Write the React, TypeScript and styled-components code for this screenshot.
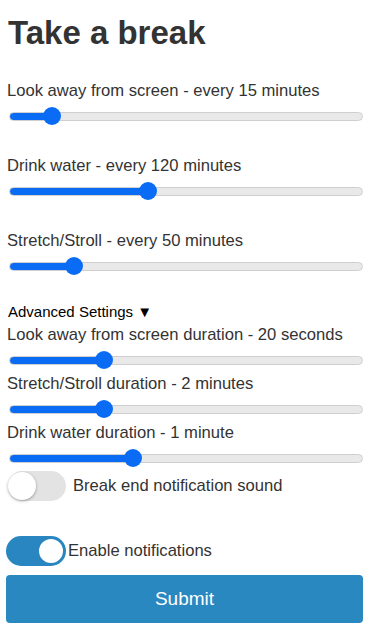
import { useState } from "react";
import styled, { createGlobalStyle } from "styled-components";

const GlobalStyle = createGlobalStyle`
  body {
    margin: 0;
    background: #fff;
    font-family: "Liberation Sans", Arial, sans-serif;
    color: #333;
  }
`;

const Page = styled.form`
  padding: 14px 7px 7px 6px;
  display: flex;
  flex-direction: column;
`;

const Title = styled.h1`
  margin: 0 0 0 2px;
  font-size: 33px;
  line-height: 37px;
  font-weight: bold;
  color: #333;
`;

const Section = styled.div<{ $tight?: boolean }>`
  display: flex;
  flex-direction: column;
  margin-top: ${(p) => (p.$tight ? "4px" : "30px")};
`;

const Label = styled.label`
  display: block;
  margin-left: 1px;
  font-size: 16.6px;
  line-height: 20px;
  white-space: nowrap;
`;

const Range = styled.input`
  -webkit-appearance: none;
  appearance: none;
  display: block;
  width: calc(100% - 3px);
  height: 20px;
  margin: 5px 0 0 3px;
  background: transparent;

  &::-webkit-slider-runnable-track {
    height: 9px;
    border-radius: 5px;
    border: 1px solid #cfcfcf;
    box-sizing: border-box;
    background: linear-gradient(
      to right,
      #0a6cf5 calc(9px + var(--fill) * (100% - 18px)),
      #e9e9e9 calc(9px + var(--fill) * (100% - 18px))
    );
  }

  &::-webkit-slider-thumb {
    -webkit-appearance: none;
    appearance: none;
    width: 18px;
    height: 18px;
    margin-top: -5.5px;
    border-radius: 50%;
    border: none;
    background: #0a6cf5;
  }
`;

const Advanced = styled.div`
  margin: 27px 0 0 2px;
  font-size: 15px;
  line-height: 18px;
  color: #000;
`;

const ToggleRow = styled.label<{ $gap: number; $top: number; $left: number }>`
  display: flex;
  align-items: center;
  gap: ${(p) => p.$gap}px;
  margin: ${(p) => p.$top}px 0 0 ${(p) => p.$left}px;
  font-size: 16.6px;
  line-height: 20px;
`;

const Track = styled.span<{ $on: boolean }>`
  position: relative;
  display: inline-block;
  width: ${(p) => (p.$on ? 60 : 58)}px;
  height: 30px;
  border-radius: 15px;
  background: ${(p) => (p.$on ? "#2a86c0" : "#e3e3e3")};
  flex-shrink: 0;
  cursor: pointer;
`;

const Knob = styled.span<{ $on: boolean }>`
  position: absolute;
  top: 1px;
  left: ${(p) => (p.$on ? "31px" : "0")};
  width: 28px;
  height: 28px;
  box-sizing: border-box;
  border-radius: 50%;
  background: #fff;
  border: ${(p) => (p.$on ? "2px solid #2a86c0" : "none")};
  box-shadow: ${(p) => (p.$on ? "none" : "0 1px 3px rgba(0,0,0,0.35)")};
`;

const HiddenCheck = styled.input`
  display: none;
`;

const Submit = styled.button`
  margin-top: 9px;
  height: 48px;
  border: none;
  border-radius: 4px;
  background: #2a88c0;
  color: #fff;
  font-family: "Liberation Sans", Arial, sans-serif;
  font-size: 19px;
  cursor: pointer;
`;

type Slider = { label: string; fill: number };

const main: Slider[] = [
  { label: "Look away from screen - every 15 minutes", fill: 0.1 },
  { label: "Drink water - every 120 minutes", fill: 0.385 },
  { label: "Stretch/Stroll - every 50 minutes", fill: 0.165 },
];

const advanced: Slider[] = [
  { label: "Look away from screen duration - 20 seconds", fill: 0.255 },
  { label: "Stretch/Stroll duration - 2 minutes", fill: 0.255 },
  { label: "Drink water duration - 1 minute", fill: 0.34 },
];

function SliderField({ label, fill, tight }: Slider & { tight?: boolean }) {
  const [value, setValue] = useState(Math.round(fill * 1000));
  return (
    <Section $tight={tight}>
      <Label>{label}</Label>
      <Range
        type="range"
        min={0}
        max={1000}
        value={value}
        onChange={(e) => setValue(Number(e.target.value))}
        style={{ "--fill": value / 1000 } as React.CSSProperties}
      />
    </Section>
  );
}

type ToggleProps = { label: string; initial: boolean; gap: number; top: number; left: number };

function Toggle({ label, initial, gap, top, left }: ToggleProps) {
  const [on, setOn] = useState(initial);
  return (
    <ToggleRow $gap={gap} $top={top} $left={left}>
      <HiddenCheck type="checkbox" checked={on} onChange={() => setOn(!on)} />
      <Track $on={on}>
        <Knob $on={on} />
      </Track>
      {label}
    </ToggleRow>
  );
}

export default function App() {
  return (
    <>
      <GlobalStyle />
      <Page onSubmit={(e) => e.preventDefault()}>
        <Title>Take a break</Title>
        {main.map((s) => (
          <SliderField key={s.label} {...s} />
        ))}
        <Advanced>Advanced Settings ▼</Advanced>
        {advanced.map((s) => (
          <SliderField key={s.label} {...s} tight />
        ))}
        <Toggle label="Break end notification sound" initial={false} gap={7} top={3} left={2} />
        <Toggle label="Enable notifications" initial={true} gap={2} top={35} left={0} />
        <Submit type="submit">Submit</Submit>
      </Page>
    </>
  );
}
